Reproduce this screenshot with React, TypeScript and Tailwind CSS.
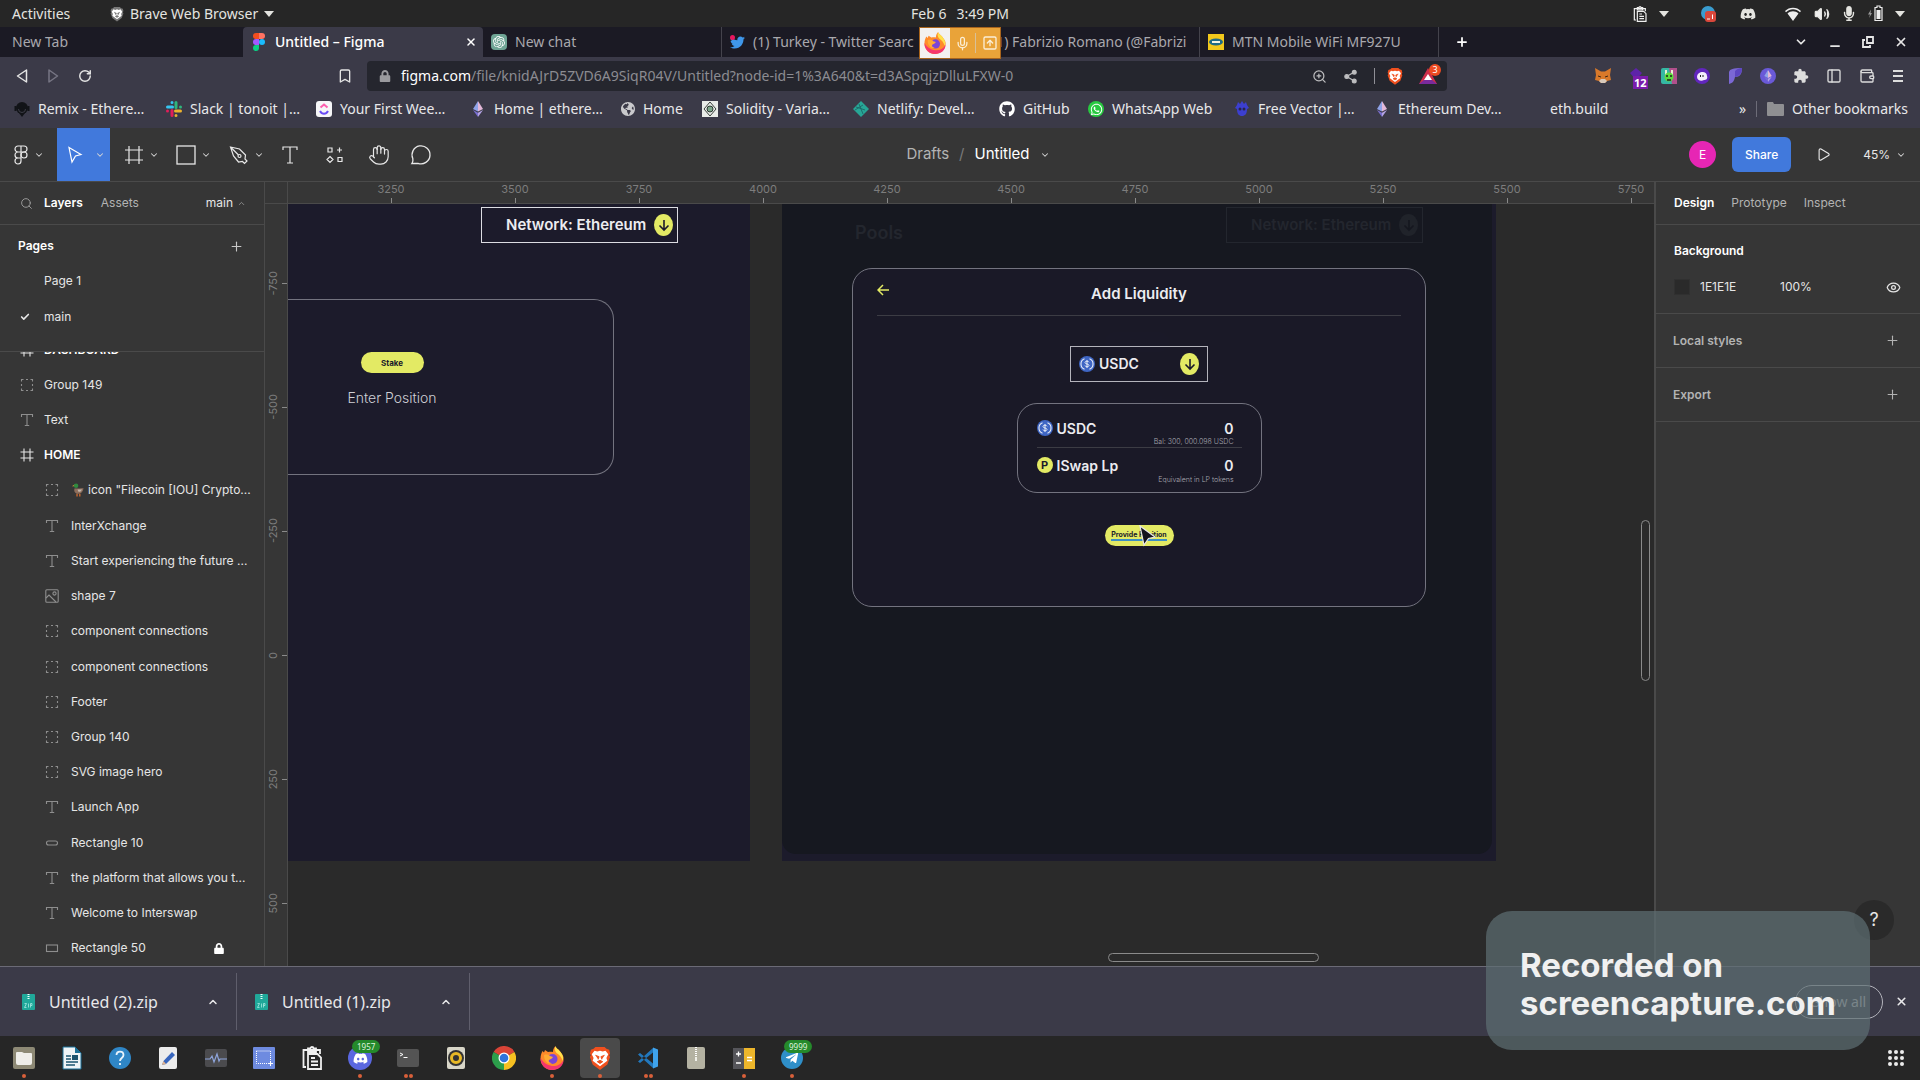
import React from 'react'
import {
  Bookmark, Check, ChevronDown, ChevronUp, Eye, Hand, Mic, Minus, PanelLeft, Play, Plus,
  RotateCw, Search, Share2, SquareArrowUp, Volume2, Wallet, X, ZoomIn,
} from 'lucide-react'
import { FaDiscord, FaGithub, FaGlobeAmericas, FaLock, FaMicrophone, FaTelegramPlane, FaTwitter, FaWhatsapp } from 'react-icons/fa'
import { MdExtension } from 'react-icons/md'
import { SiOpenai } from 'react-icons/si'

type IconProps = { className?: string }

/* ---------- small drawings ---------- */

const Caret = ({ className = '' }: IconProps) => (
  <svg viewBox="0 0 10 6" className={`w-[10px] h-[6px] shrink-0 ${className}`}><path d="M0 0h10L5 6z" fill="#e4e4e0" /></svg>
)

const BraveLion = ({ className = 'w-4 h-4', fill = '#f0501e' }: IconProps & { fill?: string }) => (
  <svg viewBox="0 0 24 26" className={className}>
    <path d="M7 1h10l2 2 3 1 1 4-1 2 1 2-3 8-8 6-8-6-3-8 1-2-1-2 1-4 3-1z" fill={fill} />
    <path d="M6 5l3 1 3-1 3 1 3-1 3 4-2 4 1 3-4 3-4 3-4-3-4-3 1-3-2-4z" fill="#fff" />
    <path d="M7 10l4 1.500-1 3M17 10l-4 1.500 1 3M9 17l3-1.500 3 1.500-3 2z" fill={fill} stroke={fill} />
  </svg>
)

const FigmaColor = () => (
  <svg viewBox="0 0 12 18" className="w-3 h-[18px] shrink-0">
    <path d="M3 0h3v6H3a3 3 0 0 1 0-6z" fill="#f24e1e" />
    <path d="M6 0h3a3 3 0 0 1 0 6H6z" fill="#ff7262" />
    <path d="M3 6h3v6H3a3 3 0 0 1 0-6z" fill="#a259ff" />
    <circle cx="9" cy="9" r="3" fill="#1abcfe" />
    <path d="M3 12h3v3a3 3 0 1 1-3-3z" fill="#0acf83" />
  </svg>
)

const FigmaOutline = () => (
  <svg viewBox="0 0 14 20" className="w-[14px] h-5" fill="none" stroke="#e8e8e8" strokeWidth="1.2">
    <path d="M7 1H4a3 3 0 0 0 0 6h3zM7 1h3a3 3 0 0 1 0 6H7zM7 7H4a3 3 0 0 0 0 6h3zM4 13h3v3a3 3 0 1 1-3-3z" />
    <circle cx="10" cy="10" r="3" />
  </svg>
)

const SlackColor = () => (
  <svg viewBox="0 0 16 16" className="w-4 h-4" strokeWidth="3" strokeLinecap="round">
    <path d="M1.500 6h5M6 1.500v0" stroke="#36c5f0" />
    <path d="M10 1.500v5M14.500 6v0" stroke="#2eb67d" />
    <path d="M14.500 10h-5M10 14.500v0" stroke="#ecb22e" />
    <path d="M6 14.500v-5M1.500 10v0" stroke="#e01e5a" />
  </svg>
)

const EthIcon = ({ className = 'w-4 h-4' }: IconProps) => (
  <svg viewBox="0 0 16 16" className={className}>
    <path d="M8 0v10.500L3 8z" fill="#8fa3e8" />
    <path d="M8 0v10.500L13 8z" fill="#e3b8d8" />
    <path d="M3 9l5 7v-4.300z" fill="#7a6fd0" />
    <path d="M13 9l-5 7v-4.300z" fill="#b5a4e6" />
  </svg>
)

const RemixIcon = () => (
  <svg viewBox="0 0 16 16" className="w-4 h-4">
    <circle cx="8" cy="7" r="6" fill="#111317" />
    <path d="M0.500 5h2v5h-2zM13.500 5h2v5h-2zM5 12h6l-3 4z" fill="#111317" />
    <path d="M4.500 8a3.500 3.500 0 0 0 7 0" stroke="#3d3d48" fill="none" />
  </svg>
)

const ClickUpIcon = () => (
  <svg viewBox="0 0 16 16" className="w-4 h-4">
    <rect width="16" height="16" rx="3" fill="#f6f6f8" />
    <path d="M4.500 6.500L8 3.500l3.500 3" stroke="#fd5fae" strokeWidth="2" fill="none" />
    <path d="M4 10c2 3.600 6 3.600 8 0" stroke="#6a4cf5" strokeWidth="2" fill="none" />
  </svg>
)

const SolidityIcon = () => (
  <svg viewBox="0 0 16 16" className="w-4 h-4">
    <path d="M0 0h16v16H0z" fill="#e9ece8" />
    <path d="M8 1l6 7-6 7-6-7z" fill="none" stroke="#3b423d" />
    <circle cx="8" cy="8" r="3" fill="#7fa78c" stroke="#2c3a31" />
  </svg>
)

const NetlifyIcon = () => (
  <svg viewBox="0 0 16 16" className="w-4 h-4">
    <path d="M8 0l8 8-8 8-8-8z" fill="#27a696" />
    <path d="M3 6l9 3M6 3l4 10M2 9l8-5" stroke="#1c5f62" strokeWidth=".8" />
  </svg>
)

const FreepikIcon = () => (
  <svg viewBox="0 0 16 16" className="w-4 h-4">
    <path d="M3 4l1-3 2 2 2-3 2 3 2-2 1 3 2 3-2 1c0 5-2 7-5 7s-5-2-5-7L1 7z" fill="#3c3fd0" />
    <circle cx="6" cy="8" r="1.500" fill="#26264a" /><circle cx="10" cy="8" r="1.500" fill="#26264a" />
  </svg>
)

const FirefoxIcon = ({ className = 'w-6 h-6' }: IconProps) => (
  <svg viewBox="0 0 24 24" className={className}>
    <path d="M15.500 0c0 2 3 3 5 6s3.500 4 3 8c-1 6-6 10-11.500 10S0.500 19.500 0.500 13c0-4 1-6 2-8l1.500 1.500L5 4l3 2c2-.5 4-.5 5 0 0-2 .5-4 2.500-6z" fill="#ff8a2a" />
    <path d="M0.500 12c0 7 5 12 11.500 12s11.500-4 11.500-10c-2 4-6 6-10 6S4 18 0.500 12z" fill="#f5366e" />
    <path d="M15.500 0c0 2 3 3 5 6s3.500 5 2 9c-1-4-3-6-6-8-2-2-2-5-1-7z" fill="#ffe14a" />
    <circle cx="12.500" cy="13" r="5" fill="#7b45d6" />
    <path d="M4 9c3-1 5 0 6 1l3 1c-1 2-3 2-4 3-1 2 1 3 3 3-4 2-8-2-8-8z" fill="#ffab33" />
  </svg>
)

const ClipboardIcon = ({ className = '' }: IconProps) => (
  <svg viewBox="0 0 20 24" className={className} fill="none" stroke="#efefef" strokeWidth="1.800">
    <path d="M4 21H1.500V4H18v4M6 4V2.500h2.500a1.500 1.500 0 0 1 3 0H14V6H6z" />
    <path d="M6 8h9.500l3.500 3.500V23H6zM9 12h4M9 15.500h7M9 19h7" />
  </svg>
)

const ZipIcon = () => (
  <svg viewBox="0 0 13 16" className="w-[13px] h-4 shrink-0">
    <rect width="13" height="16" rx="1" fill="#20a89a" />
    <path d="M6.500 0v6" stroke="#eafffb" strokeWidth="2" strokeDasharray="1 1" />
    <path d="M2.500 9.500h2l-2 4h2M6.500 9.500v4M8.500 13.500v-4h1.500v2H8.500" stroke="#a7ebe2" strokeWidth=".8" fill="none" />
  </svg>
)

const UsdcIcon = () => (
  <svg viewBox="0 0 16 16" className="w-4 h-4 shrink-0">
    <circle cx="8" cy="8" r="8" fill="#3f66c4" />
    <path d="M5.500 2.800a5.600 5.600 0 0 0 0 10.400M10.500 2.800a5.600 5.600 0 0 1 0 10.400" stroke="#e6ecf8" strokeWidth="1.100" fill="none" />
    <path d="M10 6.300c-.3-1.500-4-1.500-4 .2 0 2 4 1 4 3 0 1.700-3.800 1.700-4 0M8 4v8" stroke="#e6ecf8" fill="none" />
  </svg>
)

const DownBadge = ({ dim = false }: { dim?: boolean }) => (
  <span className={`flex items-center justify-center w-[19px] h-[22px] rounded-[50%] shrink-0 ${dim ? 'bg-[#20232a]' : 'bg-[#e3ea64]'}`}>
    <svg viewBox="0 0 12 14" className="w-3 h-[14px]" fill="none" stroke={dim ? '#15171f' : '#1c1b2b'} strokeWidth="1.600"><path d="M6 2v10M1.500 7.500L6 12l4.500-4.500" /></svg>
  </span>
)

const Duck = () => (
  <svg viewBox="0 0 14 15" className="w-[13px] h-[14px] shrink-0">
    <path d="M1 3.500L4 1.500l1 2z" fill="#e0a636" />
    <circle cx="5.500" cy="3" r="2.400" fill="#2f8a3f" />
    <path d="M4 5.500c2 1 4 0 9.500 0-.5 4-3 6-6 6s-5-3-3.500-6z" fill="#8d6e5c" />
    <path d="M7 7h5l-2 2.500H8z" fill="#c3b7ae" />
    <path d="M6.500 11.500v3M9.500 11.500v3" stroke="#e0702e" strokeWidth="1.300" />
  </svg>
)

/* layer-type glyphs */
const LayerIcon = ({ kind }: { kind: string }) => {
  const stroke = kind === 'frame' ? '#e6e6e6' : '#8e8e8e'
  return (
    <svg viewBox="0 0 14 14" className="w-[14px] h-[14px] shrink-0" fill="none" stroke={stroke} strokeWidth="1.100">
      {kind === 'frame' && <path d="M4 0.500v13M10 0.500v13M0.500 4h13M0.500 10h13" />}
      {kind === 'group' && <path d="M1.500 3.500v-2h2M6 1.500h2M10.500 1.500h2v2M12.500 6v2M12.500 10.500v2h-2M8 12.500H6M3.500 12.500h-2v-2M1.500 8V6" />}
      {kind === 'text' && <path d="M1.500 4V1.500h11V4M7 1.500v11M4.800 12.500h4.400" />}
      {kind === 'pill' && <rect x="1.500" y="5" width="11" height="4" rx="2" />}
      {kind === 'rect' && <rect x="1.500" y="4" width="11" height="6.500" />}
      {kind === 'image' && <><rect x=".8" y=".8" width="12.400" height="12.400" rx="1" /><circle cx="9.500" cy="4.500" r="1.600" /><path d="M1 9l3-3 7 7" /></>}
    </svg>
  )
}

/* ---------- desktop top bar ---------- */

const TopBar = () => (
  <header className="grid grid-cols-3 items-center h-[27px] shrink-0 bg-[#262626] text-[#e4e4e0] text-sm">
    <div className="flex items-center pl-3">
      <button className="w-[98px] text-left">Activities</button>
      <button className="flex items-center gap-[6px]"><BraveLion className="w-[14px] h-4" fill="#777" />Brave Web Browser<Caret /></button>
    </div>
    <div className="flex justify-center gap-[10px]"><span>Feb 6</span><span>3:49 PM</span></div>
    <div className="flex items-center justify-end pr-[15px]">
      <ClipboardIcon className="w-[14px] h-4 mr-3" />
      <Caret className="mr-[31px]" />
      <svg viewBox="0 0 16 16" className="w-4 h-4 mr-6"><circle cx="8" cy="7" r="7" fill="#3a9ccf" /><rect x="5" y="5" width="11" height="11" rx="3" fill="#d9473b" /><path d="M7 13h3M12.500 8.500V13" stroke="#fff" /></svg>
      <FaDiscord className="w-4 h-4 mr-[29px]" />
      <svg viewBox="0 0 16 14" className="w-4 h-[14px] mr-[13px]"><path d="M0 4C4-.5 12-.5 16 4l-1 1.200C11 1.200 5 1.200 1 5.200zM2.500 6.500c3-3 8-3 11 0L8 14z" fill="#eee" /></svg>
      <Volume2 className="w-4 h-4 mr-3" fill="#eee" />
      <FaMicrophone className="w-[14px] h-[15px] mr-3" />
      <svg viewBox="0 0 16 17" className="w-4 h-[17px] mr-[11px]">
        <path d="M3 4.500L0 9.500h2L1 13l3-5H2.500z" fill="#999" />
        <path d="M9 1h3v1.500h2v13H7v-13h2z" fill="none" stroke="#eee" strokeWidth="1.200" />
        <path d="M8.500 5h4v9h-4z" fill="#eee" />
      </svg>
      <Caret />
    </div>
  </header>
)

/* ---------- browser chrome ---------- */

const tabClass = 'flex items-center h-full w-[239px] pl-2 gap-2 overflow-hidden whitespace-nowrap text-[#a9a8ad]'

const TabStrip = () => (
  <div className="relative flex items-center h-[30px] shrink-0 bg-[#1b1a24] text-sm">
    <button className="h-full w-[243px] pl-3 text-left text-[#a9a8ad]">New Tab</button>
    <div className="flex items-center h-full w-[240px] pl-[10px] pr-[6px] gap-[10px] bg-[#3b3a48] text-white font-medium rounded-t">
      <FigmaColor />
      <span className="flex-1">Untitled – Figma</span>
      <button aria-label="Close tab"><X className="w-3 h-3" strokeWidth={3} /></button>
    </div>
    <button className={`${tabClass} border-r border-[#44434c]`}>
      <span className="flex items-center justify-center w-4 h-4 rounded-sm bg-[#6fa595] shrink-0"><SiOpenai className="w-3 h-3 text-white" /></span>
      New chat
    </button>
    <button className={tabClass}>
      <span className="relative shrink-0">
        <FaTwitter className="w-[15px] h-[15px] text-[#3f97ea]" />
        <i className="absolute left-0 top-0 w-[5px] h-[5px] rounded-full bg-[#e8175d]" />
      </span>
      (1) Turkey - Twitter Searc
    </button>
    <button className={`${tabClass} border-r border-[#44434c]`}>
      <FaTwitter className="w-[15px] h-[15px] text-[#3f97ea] shrink-0" />
      (1) Fabrizio Romano (@Fabrizi
    </button>
    <button className={`${tabClass} border-r border-[#44434c]`}>
      <svg viewBox="0 0 16 16" className="w-4 h-4 shrink-0"><path d="M0 0h16v16H0z" fill="#f2c81b" /><ellipse cx="8" cy="8" rx="7" ry="3.500" fill="#1f6a86" /><path d="M4 8h8" stroke="#f4f4e0" strokeWidth="2" /></svg>
      MTN Mobile WiFi MF927U
    </button>
    <button aria-label="New tab" className="ml-4 text-white"><Plus className="w-[14px] h-[14px]" strokeWidth={3} /></button>
    <div className="flex items-center gap-5 ml-auto pr-3 text-[#e6e6e6]">
      <button aria-label="Search tabs"><ChevronDown className="w-[14px] h-[14px]" strokeWidth={3} /></button>
      <button aria-label="Minimise" className="pt-2"><Minus className="w-[14px] h-[14px]" strokeWidth={3} /></button>
      <button aria-label="Restore"><svg viewBox="0 0 12 12" className="w-3 h-3" fill="none" stroke="#e6e6e6" strokeWidth="1.800"><path d="M5 1h6v6H5zM3 4H1v7h7V9" /></svg></button>
      <button aria-label="Close window"><X className="w-[14px] h-[14px]" strokeWidth={3} /></button>
    </div>
    {/* sharing indicator floats over the tabs */}
    <div className="absolute left-[919px] top-0 z-10 flex items-center h-8 w-[82px] border border-[#a8641c] bg-[#e9a339] text-[#fbeed6]">
      <span className="flex items-center justify-center w-[30px] h-full bg-[#f3f1f0]"><FirefoxIcon className="w-[22px] h-[22px]" /></span>
      <Mic className="w-[15px] h-[15px] ml-[5px]" />
      <span className="w-px h-5 ml-[5px] bg-[#d8c098]" />
      <SquareArrowUp className="w-4 h-4 ml-[6px]" />
    </div>
  </div>
)

const Extensions = () => (
  <div className="flex items-center gap-[17px] ml-auto pr-4 text-[#dcdcdc]">
    <svg viewBox="0 0 16 16" className="w-4 h-4"><path d="M0 0l6 3.500h4L16 0l-1 7 1 5-4 1-2 2H6l-2-2-4-1 1-5z" fill="#d9792a" /><path d="M4 13l2 2h4l2-2-2-2H6z" fill="#d8c9bb" /><path d="M3 8l3 1M13 8l-3 1" stroke="#3c2413" /></svg>
    <span className="relative">
      <svg viewBox="0 0 16 16" className="w-4 h-4"><path d="M8 0l6 5-6 7-6-7z" fill="#5d23a8" /></svg>
      <span className="absolute left-[5px] top-[8px] px-px bg-[#7a1cac] text-white text-[11px] leading-[13px] font-bold">12</span>
    </span>
    <svg viewBox="0 0 16 16" className="w-4 h-4"><rect width="16" height="16" rx="2" fill="#35b8a4" /><path d="M8 0h8v16h-5z" fill="#b0508c" /><path d="M4 2v5h8V2h-2v3H6V2z" fill="#e8f0d4" /><circle cx="8" cy="9" r="4.500" fill="#5ddb3f" /><path d="M5 8h2M9 8h2M6 12h4" stroke="#222" strokeWidth="1.500" /></svg>
    <svg viewBox="0 0 16 16" className="w-4 h-4"><circle cx="8" cy="8" r="8" fill="#6126bd" /><path d="M3 9c0-6 10-7 10-1 1 3-1 4-3 4-3 2-7 0-7-3z" fill="#f4eefc" /><path d="M6.500 7v2M9 7v2" stroke="#222" /></svg>
    <svg viewBox="0 0 16 16" className="w-4 h-4"><path d="M2 4c1-3 4-4 13-4 0 6-2 9-7 9-1 4-2 6-6 7z" fill="#7b68d4" /><path d="M8 3c2-2 4-3 7-3 0 5-2 8-7 9z" fill="#5d46c0" /></svg>
    <span className="flex items-center justify-center w-4 h-4 rounded-full bg-[#6a59d8]"><EthIcon className="w-3 h-3" /></span>
    <MdExtension className="w-4 h-4" />
    <button aria-label="Side panel"><PanelLeft className="w-4 h-4" /></button>
    <button aria-label="Wallet"><Wallet className="w-4 h-4" /></button>
    <button aria-label="Menu"><svg viewBox="0 0 12 14" className="w-3 h-[14px]" stroke="#dcdcdc" strokeWidth="2"><path d="M1 2h10M1 7h10M1 12h10" /></svg></button>
  </div>
)

const AddressRow = () => (
  <div className="flex items-center h-[38px] shrink-0 bg-[#3b3a48]">
    <div className="flex items-center w-[367px] pl-[14px] gap-4 text-[#e4e4e4]">
      <button aria-label="Back"><svg viewBox="0 0 16 16" className="w-4 h-4" fill="none" stroke="#e4e4e4" strokeWidth="1.500" strokeLinejoin="round"><path d="M12.500 2v12L3.500 8z" /></svg></button>
      <button aria-label="Forward"><svg viewBox="0 0 16 16" className="w-4 h-4" fill="none" stroke="#777684" strokeWidth="1.500" strokeLinejoin="round"><path d="M3 2v12l8.500-6z" /></svg></button>
      <button aria-label="Reload"><RotateCw className="w-[14px] h-[14px]" strokeWidth={2.5} /></button>
      <button aria-label="Bookmark" className="ml-auto mr-[14px]"><Bookmark className="w-4 h-4" /></button>
    </div>
    <label className="flex items-center h-[30px] flex-1 max-w-[1080px] min-w-0 pl-3 pr-[10px] rounded bg-[#25262e] text-sm text-white">
      <FaLock className="w-3 h-3 mr-[10px] text-[#9a9a9e] shrink-0" />
      <span>figma.com</span>
      <input
        aria-label="Address"
        className="flex-1 min-w-0 bg-transparent text-[#8c8c92] outline-none"
        defaultValue="/file/knidAJrD5ZVD6A9SiqR04V/Untitled?node-id=1%3A640&t=d3ASpqjzDlluLFXW-0"
      />
      <span className="flex items-center gap-4 text-[#bdbdbf]">
        <ZoomIn className="w-[15px] h-[15px]" />
        <Share2 className="w-[15px] h-[15px]" fill="#bdbdbf" />
        <span className="w-px h-4 bg-[#8f8f96]" />
        <BraveLion className="w-[16px] h-[18px] -ml-1" />
        <span className="relative">
          <svg viewBox="0 0 18 16" className="w-[18px] h-4"><path d="M9 0l9 16H0z" fill="#cf2f4b" /><path d="M0 16l5-4h8l5 4z" fill="#7a2a9c" /><path d="M9 6l4 6H5z" fill="#fff" /></svg>
          <span className="absolute -right-1 -top-1 w-3 h-3 rounded-full bg-[#ee4b22] text-white text-[9px] leading-3 text-center">3</span>
        </span>
      </span>
    </label>
    <Extensions />
  </div>
)

const bookmarks = [
  { label: 'Remix - Ethere…', icon: <RemixIcon />, width: 'w-[152px]' },
  { label: 'Slack | tonoit |…', icon: <SlackColor />, width: 'w-[150px]' },
  { label: 'Your First Wee…', icon: <ClickUpIcon />, width: 'w-[154px]' },
  { label: 'Home | ethere…', icon: <EthIcon />, width: 'w-[151px]' },
  { label: 'Home', icon: <FaGlobeAmericas className="w-[14px] h-4 text-[#c9c9cc]" />, width: 'w-[81px]' },
  { label: 'Solidity - Varia…', icon: <SolidityIcon />, width: 'w-[151px]' },
  { label: 'Netlify: Devel…', icon: <NetlifyIcon />, width: 'w-[146px]' },
  { label: 'GitHub', icon: <FaGithub className="w-4 h-4 text-white" />, width: 'w-[89px]' },
  { label: 'WhatsApp Web', icon: <span className="flex items-center justify-center w-4 h-4 rounded-full bg-[#28c940]"><FaWhatsapp className="w-[13px] h-[13px] text-white" /></span>, width: 'w-[146px]' },
  { label: 'Free Vector |…', icon: <FreepikIcon />, width: 'w-[140px]' },
  { label: 'Ethereum Dev…', icon: <EthIcon />, width: 'w-[152px]' },
]

const BookmarksBar = () => (
  <nav className="flex items-center h-[33px] pl-[14px] pr-3 pb-[5px] shrink-0 bg-[#3b3a48] text-[#e8e8ea] text-sm whitespace-nowrap">
    {bookmarks.map((b, i) => (
      <a key={i} href="#" className={`flex items-center gap-2 ${b.width}`}>{b.icon}{b.label}</a>
    ))}
    <a href="#" className="ml-6">eth.build</a>
    <button className="ml-auto">»</button>
    <span className="w-px h-4 mx-[10px] bg-[#6d6c78]" />
    <button className="flex items-center gap-2">
      <svg viewBox="0 0 17 14" className="w-[17px] h-[14px]"><path d="M0 1a1 1 0 0 1 1-1h5l1 2h9a1 1 0 0 1 1 1v10a1 1 0 0 1-1 1H1a1 1 0 0 1-1-1z" fill="#8f8f92" /></svg>
      Other bookmarks
    </button>
  </nav>
)

/* ---------- figma toolbar ---------- */

const Chev = () => <ChevronDown className="w-[10px] h-[10px] text-[#d6d6d6]" strokeWidth={2.5} />

const toolSvg = 'w-[22px] h-[22px]'

const FigmaToolbar = () => (
  <div className="grid grid-cols-3 items-center h-[54px] shrink-0 bg-[#363636] border-b border-[#4a4a4a] text-[#e8e8e8] font-[Inter,sans-serif]">
    <div className="flex items-center h-full">
      <button aria-label="Main menu" className="flex items-center gap-[6px] w-[57px] h-full pl-[14px]"><FigmaOutline /><Chev /></button>
      <button aria-label="Move" className="flex items-center justify-end gap-3 pr-[5px] w-[53px] h-full bg-[#4179dc]">
        <svg viewBox="0 0 16 18" className="w-4 h-[18px]" fill="none" stroke="#fff" strokeWidth="1.200"><path d="M2 1.500l12 7-5.500 1.500L5 16z" /></svg>
        <Chev />
      </button>
      <button aria-label="Frame" className="flex items-center gap-1 w-[53px] pl-[13px]">
        <svg viewBox="0 0 22 22" className={toolSvg} fill="none" stroke="currentColor" strokeWidth="1.200"><path d="M6 2v18M16 2v18M2 6h18M2 16h18" /></svg><Chev />
      </button>
      <button aria-label="Rectangle" className="flex items-center gap-1 w-[53px] pl-3">
        <svg viewBox="0 0 22 22" className={toolSvg} fill="none" stroke="currentColor" strokeWidth="1.300"><rect x="2" y="2" width="18" height="18" /></svg><Chev />
      </button>
      <button aria-label="Pen" className="flex items-center gap-1 w-[53px] pl-3">
        <svg viewBox="0 0 22 22" className={toolSvg} fill="none" stroke="currentColor" strokeWidth="1.200"><path d="M2.500 3l9 2 6 6-.5 4 2 2-2.500 2.500-2-2-4 .5-5-6zM3 3.500l7.500 7.500" /><circle cx="11.500" cy="12" r="1.500" /></svg><Chev />
      </button>
      <button aria-label="Text" className="flex justify-center w-[42px]">
        <svg viewBox="0 0 18 20" className="w-[18px] h-5" fill="none" stroke="currentColor" strokeWidth="1.200"><path d="M2 5V2h14v3M9 2v16M6 18h6" /></svg>
      </button>
      <button aria-label="Resources" className="flex justify-center w-12">
        <svg viewBox="0 0 18 18" className="w-[18px] h-[18px]" fill="none" stroke="currentColor" strokeWidth="1.200"><path d="M2 2h4v4H2zM13.500 1.500v5M11 4h5M12 11.500h4v4h-4zM4 10.500l3 3-3 3-3-3z" /></svg>
      </button>
      <button aria-label="Hand" className="flex justify-center w-10"><Hand className="w-[22px] h-[22px]" strokeWidth={1.3} /></button>
      <button aria-label="Comment" className="flex justify-center w-[44px]">
        <svg viewBox="0 0 22 22" className={toolSvg} fill="none" stroke="currentColor" strokeWidth="1.300"><path d="M2 19.500c1.300-1.700 1.200-3 .8-5A9 9 0 1 1 8 19.300z" /></svg>
      </button>
    </div>
    <div className="flex items-center justify-center gap-[10px] pl-9 text-[15px]">
      <span className="text-[#b3b3b3]">Drafts</span>
      <span className="text-[#7a7a7a]">/</span>
      <span className="text-white">Untitled</span>
      <Chev />
    </div>
    <div className="flex items-center justify-end pr-[14px] text-xs">
      <span className="flex items-center justify-center w-[27px] h-[27px] mr-4 rounded-full bg-[#e626b4] text-white">E</span>
      <button className="w-[59px] h-[35px] mr-[25px] rounded-md bg-[#4179dc] text-white font-medium">Share</button>
      <button aria-label="Present" className="mr-8"><Play className="w-[15px] h-[15px]" strokeWidth={1.8} /></button>
      <button className="flex items-center gap-[6px]">45%<Chev /></button>
    </div>
  </div>
)

/* ---------- left panel ---------- */

const layers = [
  { kind: 'frame', label: 'DASHBOARD', root: true },
  { kind: 'group', label: 'Group 149', root: true },
  { kind: 'text', label: 'Text', root: true },
  { kind: 'frame', label: 'HOME', root: true },
  { kind: 'group', label: 'icon "Filecoin [IOU] Crypto...', duck: true },
  { kind: 'text', label: 'InterXchange' },
  { kind: 'text', label: 'Start experiencing the future ...' },
  { kind: 'image', label: 'shape 7' },
  { kind: 'group', label: 'component connections' },
  { kind: 'group', label: 'component connections' },
  { kind: 'group', label: 'Footer' },
  { kind: 'group', label: 'Group 140' },
  { kind: 'group', label: 'SVG image hero' },
  { kind: 'text', label: 'Launch App' },
  { kind: 'pill', label: 'Rectangle 10' },
  { kind: 'text', label: 'the platform that allows you t...' },
  { kind: 'text', label: 'Welcome to Interswap' },
  { kind: 'rect', label: 'Rectangle 50', locked: true },
]

const LeftPanel = () => (
  <aside className="flex flex-col w-[265px] shrink-0 min-h-0 bg-[#363636] border-r border-[#4a4a4a] text-[#e6e6e6] text-xs whitespace-nowrap">
    <div className="flex items-center h-[43px] shrink-0 pl-5 pr-[18px] border-b border-[#4a4a4a]">
      <button aria-label="Search layers" className="mr-[11px]"><Search className="w-[13px] h-[13px] text-[#9a9a9a]" strokeWidth={1.8} /></button>
      <button className="font-semibold text-white mr-[18px]">Layers</button>
      <button className="text-[#b3b3b3]">Assets</button>
      <button className="flex items-center gap-1 ml-auto">main<ChevronUp className="w-[9px] h-[9px] text-[#a0a0a0]" /></button>
    </div>
    <div className="shrink-0 h-[127px] border-b border-[#4a4a4a]">
      <div className="flex items-center justify-between h-[38px] pt-1 pl-[18px] pr-5 font-semibold text-white">
        Pages
        <button aria-label="Add page"><Plus className="w-[15px] h-[15px] text-[#c8c8c8]" strokeWidth={1.8} /></button>
      </div>
      <div className="flex items-center h-[36px] pl-11">Page 1</div>
      <div className="flex items-center h-[36px] pl-5"><Check className="w-[10px] h-[10px] mr-[14px]" strokeWidth={4} />main</div>
    </div>
    <div className="flex flex-col flex-1 min-h-0 overflow-hidden">
      <ul className="flex flex-col flex-1 -mt-5">
        {layers.map((l, i) => (
          <li key={i} className={`flex flex-1 items-center ${l.root ? 'pl-5 gap-[10px]' : 'pl-[45px] gap-3'} ${l.root && l.kind === 'frame' ? 'font-semibold text-white' : ''}`}>
            <LayerIcon kind={l.kind} />
            <span className="flex items-center gap-1">{l.duck && <Duck />}{l.label}</span>
            {l.locked && <FaLock className="w-[10px] h-[11px] ml-auto mr-10 text-white" />}
          </li>
        ))}
      </ul>
    </div>
  </aside>
)

/* ---------- canvas ---------- */

const xTicks = [3250, 3500, 3750, 4000, 4250, 4500, 4750, 5000, 5250, 5500, 5750]
const yTicks = [-750, -500, -250, 0, 250, 500]

const StakeFrame = () => (
  <div className="absolute left-0 top-0 flex flex-col w-[462px] h-[657px] bg-[#1c1b2b]">
    <label className="flex items-center justify-between self-end w-[197px] h-9 mt-[3px] mr-[72px] pl-6 pr-1 border border-[#dcdce2]">
      <select aria-label="Network" className="appearance-none bg-transparent text-[15px] font-semibold text-[#ececf0]"><option>Network: Ethereum</option></select>
      <DownBadge />
    </label>
    <div className="flex flex-col items-center w-[326px] h-[176px] mt-14 pt-[52px] pr-[117px] rounded-r-[20px] border border-l-0 border-[#73737f]">
      <button className="w-[63px] h-[21px] rounded-full bg-[#e3ea64] text-[#1c1b2b] text-[8px] font-bold">Stake</button>
      <p className="mt-[15px] text-sm leading-5 font-light text-[#d0d0d6]">Enter Position</p>
    </div>
  </div>
)

const LiquidityModal = () => (
  <div className="absolute left-[70px] top-16 flex flex-col items-center w-[574px] h-[339px] px-6 rounded-[20px] border border-[#73737f] bg-[#1a1928]/95 text-[#ececf0]">
    <div className="grid grid-cols-[1fr_auto_1fr] items-center w-full h-[47px] pt-1 border-b border-[#3c3c44]">
      <button aria-label="Back" className="-mt-2">
        <svg viewBox="0 0 12 12" className="w-3 h-3" fill="none" stroke="#e3ea64" strokeWidth="1.500"><path d="M12 6H1.500M6 1L1 6l5 5" /></svg>
      </button>
      <h2 className="text-[15px] font-semibold">Add Liquidity</h2>
    </div>
    <label className="flex items-center w-[138px] h-9 mt-[30px] px-2 border border-[#b4b4bc]">
      <UsdcIcon />
      <select aria-label="Token" className="appearance-none flex-1 ml-1 bg-transparent text-sm font-semibold"><option>USDC</option></select>
      <DownBadge />
    </label>
    <div className="w-[245px] h-[90px] mt-[21px] px-[19px] rounded-[20px] border border-[#73737f]">
      <div className="flex h-[44px] pt-4 border-b border-[#3c3c44]">
        <UsdcIcon />
        <span className="ml-1 text-sm leading-[18px] font-semibold">USDC</span>
        <span className="ml-auto mr-2 text-right text-sm leading-[18px] font-semibold">0<small className="block text-[7px] leading-[7px] font-light text-[#a8a8b0]">Bal: 300, 000.098 USDC</small></span>
      </div>
      <div className="flex pt-[9px]">
        <span className="flex items-center justify-center w-4 h-4 rounded-full bg-[#e3ea64] text-[#1c1b2b] text-[11px] font-bold">P</span>
        <span className="ml-1 text-sm leading-[18px] font-semibold">ISwap Lp</span>
        <span className="ml-auto mr-2 text-right text-sm leading-[18px] font-semibold">0<small className="block text-[7px] leading-[10px] font-light text-[#a8a8b0]">Equivalent in LP tokens</small></span>
      </div>
    </div>
    <button className="w-[69px] h-[21px] mt-8 rounded-full bg-[#e3ea64] text-[#1c1b2b] text-[7px] font-bold whitespace-nowrap">
      <span className="border-b-2 border-[#3d8fc4]">Provide Position</span>
    </button>
    <svg viewBox="0 0 18 22" className="absolute left-[286px] top-[256px] w-[18px] h-[22px]"><path d="M1 1l15 11-6.500 1.500L5 20z" fill="#15151c" stroke="#e8e8e8" strokeWidth="1.200" /></svg>
  </div>
)

const PoolsFrame = () => (
  <div className="absolute left-[494px] top-0 w-[714px] h-[657px] bg-[#1c1b2b]">
    <div className="w-[710px] h-[650px] rounded-b-[14px] bg-[#161820] text-[#23262e]">
      <div className="flex items-start justify-between pt-[3px] pl-[73px] pr-[69px]">
        <h1 className="pt-3 text-lg font-semibold">Pools</h1>
        <div className="flex items-center justify-between w-[197px] h-9 pl-6 pr-1 border text-[15px] font-semibold">Network: Ethereum<DownBadge dim /></div>
      </div>
      <div className="flex flex-col items-center w-[442px] h-[176px] mt-14 mx-auto pt-7 rounded-[20px] border border-[#191b24]">
        <span className="px-2 py-1 rounded-full bg-[#20232a] text-[#15171f] text-[8px]">Add Position</span>
        <p className="mt-[14px] w-[200px] text-center text-sm leading-6 font-light">Your added liquid positions will appear here</p>
      </div>
    </div>
    <LiquidityModal />
  </div>
)

const Canvas = () => (
  <main className="grid grid-cols-[23px_1fr] grid-rows-[22px_1fr] flex-1 min-w-0 min-h-0 bg-[#2a2a2a] text-[11px] text-[#7d7d7d]">
    <div className="bg-[#363636] border-r border-b border-[#4a4a4a]" />
    <div className="flex min-w-0 overflow-hidden pl-[41px] bg-[#363636] border-b border-[#4a4a4a]">
      {xTicks.map(t => (
        <div key={t} className="flex flex-col items-center justify-between w-[124px] shrink-0">
          <span className="leading-[14px]">{t}</span><i className="w-px h-[5px] bg-[#8a8a8a]" />
        </div>
      ))}
    </div>
    <div className="min-h-0 overflow-hidden pt-[17px] bg-[#363636] border-r border-[#4a4a4a]">
      {yTicks.map(t => (
        <div key={t} className="flex items-center justify-between h-[124px]">
          <span className="rotate-180 leading-4 [writing-mode:vertical-rl]">{t}</span><i className="w-[5px] h-px bg-[#8a8a8a]" />
        </div>
      ))}
    </div>
    <div className="relative overflow-hidden">
      <StakeFrame />
      <PoolsFrame />
      <div className="absolute right-1 top-[316px] w-[9px] h-[161px] rounded-full border border-[#8a8a8a] bg-[#2a2a2a]" />
      <div className="absolute left-[820px] bottom-1 w-[211px] h-[9px] rounded-full border border-[#8a8a8a] bg-[#2a2a2a]" />
    </div>
  </main>
)

/* ---------- right panel ---------- */

const AddRow = ({ label }: { label: string }) => (
  <div className="flex items-center justify-between h-[54px] pl-[17px] pr-5 border-b border-[#4a4a4a] font-semibold text-[#b3b3b3]">
    {label}
    <button aria-label={`Add ${label}`}><Plus className="w-[15px] h-[15px]" strokeWidth={1.8} /></button>
  </div>
)

const RightPanel = () => (
  <aside className="relative w-[266px] shrink-0 bg-[#363636] border-l-2 border-[#4a4a4a] text-[#e6e6e6] text-xs">
    <div className="flex items-center gap-[17px] h-[43px] pl-[18px] border-b border-[#4a4a4a] text-[#b3b3b3]">
      <button className="font-semibold text-white">Design</button>
      <button>Prototype</button>
      <button>Inspect</button>
    </div>
    <div className="h-[89px] pl-[18px] pr-[19px] pt-4 border-b border-[#4a4a4a]">
      <h3 className="leading-5 font-semibold text-white">Background</h3>
      <div className="flex items-center h-5 mt-4">
        <span className="w-4 h-4 mr-[10px] bg-[#2a2a2a] border border-[#303030]" />
        <input aria-label="Colour" defaultValue="1E1E1E" className="w-20 bg-transparent outline-none" />
        <input aria-label="Opacity" defaultValue="100%" className="w-[50px] bg-transparent outline-none" />
        <button aria-label="Toggle visibility" className="ml-auto"><Eye className="w-[15px] h-[15px]" /></button>
      </div>
    </div>
    <AddRow label="Local styles" />
    <AddRow label="Export" />
    <button className="absolute right-[26px] bottom-[26px] w-10 h-10 rounded-full bg-[#2a2a2a] text-lg">?</button>
  </aside>
)

/* ---------- downloads and dock ---------- */

const Download = ({ name }: { name: string }) => (
  <div className="flex items-center w-[233px] h-[57px] pl-[18px] pr-[17px] border-r border-[#5f5e6c]">
    <ZipIcon />
    <span className="flex-1 ml-[14px]">{name}</span>
    <button aria-label="Download options"><ChevronUp className="w-3 h-3" strokeWidth={3} /></button>
  </div>
)

const DownloadsBar = () => (
  <div className="flex items-center h-[70px] shrink-0 pl-1 pr-3 bg-[#3b3a48] border-t border-[#6b6a76] text-[#e8e8ea] text-base">
    <Download name="Untitled (2).zip" />
    <Download name="Untitled (1).zip" />
    <button className="w-[88px] h-[34px] ml-auto mr-3 rounded-full border border-[#b4b4bc] text-sm text-[#b9b9bd]">Show all</button>
    <button aria-label="Close downloads"><X className="w-[13px] h-[13px]" strokeWidth={3} /></button>
  </div>
)

const dockSvg = 'w-6 h-6'

const dock = [
  { name: 'Files', dots: 1, icon: <svg viewBox="0 0 24 24" className={dockSvg}><rect x="1" y="1" width="22" height="22" rx="2" fill="#8d8975" /><path d="M4 7a1 1 0 0 1 1-1h5l2 1h7a1 1 0 0 1 1 1v9a2 2 0 0 1-2 2H6a2 2 0 0 1-2-2z" fill="#efeeea" /></svg> },
  { name: 'Writer', dots: 0, icon: <svg viewBox="0 0 24 24" className={dockSvg}><path d="M3 1h12l6 6v16H3z" fill="#eef4f7" stroke="#1b6f96" /><path d="M15 1l6 6h-6z" fill="#1b6f96" /><path d="M6 10h5M6 13h5M6 16h12M6 19h9" stroke="#1b5470" strokeWidth="1.500" /><path d="M12 9h6v5h-6z" fill="#1b5470" /></svg> },
  { name: 'Help', dots: 0, icon: <svg viewBox="0 0 24 24" className={dockSvg}><circle cx="12" cy="12" r="11" fill="#2f86c6" /><path d="M8.500 9c0-4.500 7-4.500 7 0 0 3-3.500 3-3.500 6M12 17v2" stroke="#e8f3fb" strokeWidth="1.800" fill="none" /></svg> },
  { name: 'Text editor', dots: 0, icon: <svg viewBox="0 0 24 24" className={dockSvg}><rect x="3" y="1" width="18" height="22" rx="2" fill="#ececec" /><path d="M6 19l1.500-4L16 6l3 3-9 9z" fill="#3765bd" /><path d="M6 19l1.500-4 2.500 3z" fill="#e2b38c" /></svg> },
  { name: 'Monitor', dots: 0, icon: <svg viewBox="0 0 24 24" className={dockSvg}><rect x="1" y="3" width="22" height="18" rx="2" fill="#4b4b4e" /><path d="M1 13h5l2-3 2 6 3-8 2 7 1-2h7" stroke="#8ea5dc" fill="none" strokeWidth="1.200" /></svg> },
  { name: 'Screenshot', dots: 0, icon: <svg viewBox="0 0 24 24" className={dockSvg}><rect x="1" y="1" width="22" height="22" rx="1" fill="#6e8be0" /><path d="M4.500 5h14v12.500h-14z" fill="none" stroke="#fff" strokeDasharray="1 1" /><path d="M18.500 15v5M16 17.500h5" stroke="#fff" /></svg> },
  { name: 'Clipboard', dots: 0, icon: <ClipboardIcon className="w-5 h-6" /> },
  { name: 'Discord', dots: 1, badge: '1957', icon: <span className="flex items-center justify-center w-6 h-6 rounded-full bg-[#5a67e0]"><FaDiscord className="w-[15px] h-[15px] text-white" /></span> },
  { name: 'Terminal', dots: 2, icon: <svg viewBox="0 0 24 24" className={dockSvg}><rect x="1" y="3" width="22" height="18" rx="2" fill="#545454" /><path d="M4 7l3 1.500L4 10M7.500 11.500h4" stroke="#fff" fill="none" /></svg> },
  { name: 'Rhythmbox', dots: 0, icon: <svg viewBox="0 0 24 24" className={dockSvg}><rect x="3" y="1" width="18" height="22" rx="2" fill="#d8d6c8" /><circle cx="12" cy="12" r="8" fill="#333" /><circle cx="12" cy="12" r="4.500" fill="none" stroke="#e8b926" strokeWidth="3" /></svg> },
  { name: 'Chrome', dots: 0, icon: <svg viewBox="0 0 24 24" className={dockSvg}><path d="M12 12L1.600 6A12 12 0 0 1 22.400 6z" fill="#d94437" /><path d="M12 12L1.600 6A12 12 0 0 0 12 24z" fill="#2c9e4b" /><path d="M12 12l10.400-6A12 12 0 0 1 12 24z" fill="#f6c021" /><circle cx="12" cy="12" r="5.500" fill="#fff" /><circle cx="12" cy="12" r="4.300" fill="#2f74dd" /></svg> },
  { name: 'Firefox', dots: 1, icon: <FirefoxIcon /> },
  { name: 'Brave', dots: 1, active: true, icon: <BraveLion className="w-[22px] h-6" /> },
  { name: 'VS Code', dots: 2, icon: <svg viewBox="0 0 24 24" className={dockSvg}><path d="M2 8.500l2-1.500L17 17.500V22zM2 15.500l2 1.500L17 6.500V2z" fill="#2278bd" /><path d="M17 1.500l5 2v17l-5 2z" fill="#3fa3ec" /></svg> },
  { name: 'Archive', dots: 0, icon: <svg viewBox="0 0 24 24" className={dockSvg}><rect x="3" y="1" width="18" height="22" rx="2" fill="#b4b2a2" /><path d="M12 1v10" stroke="#fff" strokeWidth="2" strokeDasharray="1 1" /><path d="M12 11v4" stroke="#efefe8" strokeWidth="2" /></svg> },
  { name: 'Calculator', dots: 1, icon: <svg viewBox="0 0 24 24" className={dockSvg}><path d="M1 2h11v21H1z" fill="#55555a" /><path d="M12 2h11v21H12z" fill="#edb62b" /><path d="M6.500 5.500v5M4 8h5M4 17h5M15 11.500h5M15 14.500h5" stroke="#fff" strokeWidth="1.300" /></svg> },
  { name: 'Telegram', dots: 1, badge: '9999', icon: <span className="flex items-center justify-center w-[22px] h-[22px] rounded-full bg-[#2f8fc9]"><FaTelegramPlane className="w-[14px] h-[14px] text-white" /></span> },
]

const Dock = () => (
  <footer className="flex items-center h-11 shrink-0 bg-[#262626]">
    {dock.map(d => (
      <div key={d.name} className="flex justify-center w-12">
        <button aria-label={d.name} className={`relative flex items-center justify-center w-10 h-10 rounded ${d.active ? 'bg-[#4a4a4a]' : ''}`}>
          {d.icon}
          {d.badge && <span className="absolute left-3 top-[2px] px-[5px] rounded-full bg-[#258a2b] text-[#dff3df] text-[8px] leading-[13px]">{d.badge}</span>}
          <span className="absolute bottom-0 inset-x-0 flex justify-center gap-px">
            {Array.from({ length: d.dots }, (_, i) => <i key={i} className="w-1 h-1 rounded-full bg-[#d9603a]" />)}
          </span>
        </button>
      </div>
    ))}
    <button aria-label="Show applications" className="grid grid-cols-3 gap-[2px] ml-auto mr-4">
      {Array.from({ length: 9 }, (_, i) => <i key={i} className="w-1 h-1 rounded-full bg-[#ececec]" />)}
    </button>
  </footer>
)

const App = () => (
  <div className="relative flex flex-col h-screen overflow-hidden bg-[#262626] font-['Noto_Sans',sans-serif]">
    <TopBar />
    <TabStrip />
    <AddressRow />
    <BookmarksBar />
    <FigmaToolbar />
    <div className="flex flex-1 min-h-0 font-[Inter,sans-serif]">
      <LeftPanel />
      <Canvas />
      <RightPanel />
    </div>
    <DownloadsBar />
    <Dock />
    {/* recorder watermark */}
    <div className="absolute right-[50px] bottom-[30px] w-[384px] h-[139px] pl-[34px] pt-[35px] rounded-[26px] bg-[#5e6f74]/70 text-[#f0f0f0] text-[33px] leading-[38px] font-bold font-[Inter,sans-serif]">
      Recorded on<br />screencapture.com
    </div>
  </div>
)

export default App
